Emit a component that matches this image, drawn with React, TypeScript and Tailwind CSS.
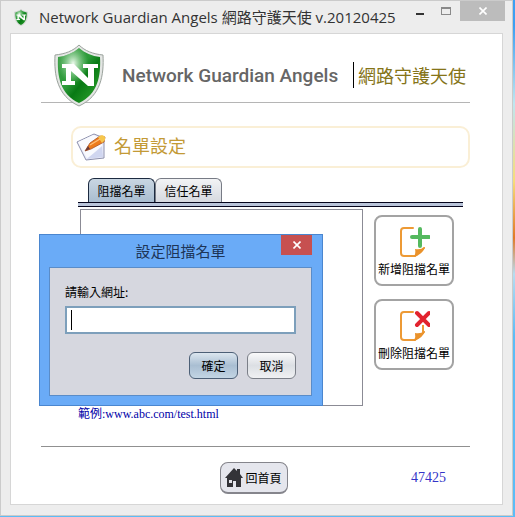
import { useState } from 'react';

// ---------------------------------------------------------------------------
// Shared styles
// ---------------------------------------------------------------------------

const UI_FONT = "font-['Open_Sans','Noto_Sans_CJK_TC',sans-serif]";

const CJK_FONT = "font-['Noto_Sans_CJK_TC',sans-serif]";

const SERIF_FONT = "font-['Liberation_Serif','Noto_Sans_CJK_TC',serif]";

const ACTION_CLASS =
  'flex h-[71px] w-20 flex-col items-center rounded-lg border-2 border-[#a3a3a3] bg-white pt-2 text-xs leading-4 text-black';

const DIALOG_BUTTON_CLASS =
  'h-[27px] w-[49px] rounded-md border text-xs leading-4 text-black';

// ---------------------------------------------------------------------------
// Icons
// ---------------------------------------------------------------------------

function ShieldLogo({ className }: { className: string }) {
  return (
    <svg viewBox="0 0 50 63" className={className} aria-hidden="true">
      <defs>
        <linearGradient id="shield" x1="0" y1="0" x2="1" y2="1">
          <stop offset="0" stopColor="#3fa049" />
          <stop offset=".45" stopColor="#2b9a38" />
          <stop offset=".6" stopColor="#087a14" />
          <stop offset="1" stopColor="#35a832" />
        </linearGradient>
        <radialGradient id="shine" cx=".36" cy=".28" r=".36">
          <stop offset="0" stopColor="#effbef" />
          <stop offset="1" stopColor="#8fd394" stopOpacity="0" />
        </radialGradient>
      </defs>
      <path
        d="M25 1C19 7 11 10 1 11C0 31 3 52 25 62C47 52 50 31 49 11C39 10 31 7 25 1Z"
        fill="#e4e6e4"
        stroke="#9aa29c"
        strokeWidth="1"
      />
      <path
        d="M25 4C19 9 12 12 4 13C3 32 6 50 25 59C44 50 47 32 46 13C38 12 31 9 25 4Z"
        fill="url(#shield)"
      />
      <path
        d="M25 4C19 9 12 12 4 13C3 32 6 50 25 59C44 50 47 32 46 13C38 12 31 9 25 4Z"
        fill="url(#shine)"
      />
      <path
        d="M8 20H20L34 34V24H29V20H44V24H40V42H34L17 27V37H21V41H8V37H12V24H8Z"
        fill="#fff"
      />
    </svg>
  );
}

function NotePencilIcon() {
  return (
    <svg viewBox="0 0 30 28" className="h-7 w-[30px]" aria-hidden="true">
      <path d="M1 9L18 1L28 5L28 25L10 27Z" fill="#eceefa" stroke="#8d90ad" strokeWidth="1" />
      <path d="M2 9L17 2L26 6L26 15L11 25Z" fill="#fff" opacity=".7" />
      <path d="M11 26L27 24L26 13Z" fill="#c9d0ee" opacity=".8" />
      <path d="M9 18L14 10L24 3L29 4L28 9L15 16Z" fill="#ee7c1c" stroke="#a9542a" strokeWidth=".8" />
      <path d="M22 4L26 2Q30 3 29 7L26 10Z" fill="#f6c64c" />
      <path d="M9 18L12 13L14 16Z" fill="#6a3a3a" />
      <path d="M14 12L24 6" stroke="#ffc07a" strokeWidth="1.4" />
    </svg>
  );
}

/** Dog-eared page with either a green plus or a red cross in the corner. */
function PageIcon({ mark }: { mark: 'add' | 'remove' }) {
  return (
    <svg viewBox="0 0 32 32" className="h-8 w-8" fill="none" aria-hidden="true">
      <path
        d="M15 3H6Q3 3 3 6V28Q3 31 6 31H17L26 23"
        stroke="#ed9a35"
        strokeWidth="2"
        strokeLinecap="round"
      />
      <path d="M16 32Q18 28 17 24Q23 25 27 22Q25 29 16 32Z" fill="#ea922b" />
      {mark === 'add' ? (
        <path d="M22 4V21M14 12H31" stroke="#55b95f" strokeWidth="4" strokeLinecap="round" />
      ) : (
        <>
          <path d="M25 16V23" stroke="#ed9a35" strokeWidth="2" />
          <path d="M19 4L31 16M31 4L19 16" stroke="#e2232e" strokeWidth="4" strokeLinecap="round" />
        </>
      )}
    </svg>
  );
}

function HomeIcon() {
  return (
    <svg viewBox="0 0 18 19" className="h-[19px] w-[18px]" aria-hidden="true">
      <path d="M9 0L12 3V1H15V6L18 10H16V19H11V13H8V19H2V10H0Z" fill="#333338" />
      <path d="M4 12H7V15H4Z" fill="#e4e4ea" />
    </svg>
  );
}

function CrossIcon() {
  return (
    <svg viewBox="0 0 8 8" className="size-2" aria-hidden="true">
      <path d="M.5.5L7.5 7.5M7.5.5L.5 7.5" stroke="#fff" strokeWidth="1.6" />
    </svg>
  );
}

// ---------------------------------------------------------------------------
// Window parts
// ---------------------------------------------------------------------------

function TitleBar() {
  return (
    <div className="flex h-8 items-start pr-[5px]">
      <ShieldLogo className="mt-2 ml-2.5 h-[17px] w-4 shrink-0" />
      <h1
        className={`mt-1 ml-2.5 min-w-0 flex-1 text-[15px] leading-6 whitespace-nowrap text-[#333] ${UI_FONT}`}
      >
        Network Guardian Angels 網路守護天使 v.20120425
      </h1>
      <button type="button" aria-label="Minimize" className="flex h-5 w-6 items-end justify-center pb-1.5">
        <span className="h-0.5 w-2 bg-[#333]" />
      </button>
      <button type="button" aria-label="Maximize" className="flex h-5 w-7 items-center justify-center">
        <span className="h-2 w-2.5 border border-t-2 border-[#8a8a8a]" />
      </button>
      <button
        type="button"
        aria-label="Close"
        className="flex h-5 w-[45px] items-center justify-center bg-[#bcbcbc]"
      >
        <CrossIcon />
      </button>
    </div>
  );
}

function Brand() {
  return (
    <header className="mr-8 ml-[30px] flex h-[69px] items-start border-b border-[#b5b5b5]">
      <ShieldLogo className="mt-2.5 ml-[13px] h-[63px] w-[50px] shrink-0" />
      <h2 className="mt-[30px] ml-[18px] font-['Roboto',sans-serif] text-[19px] leading-6 font-medium whitespace-nowrap text-[#666]">
        Network Guardian Angels
      </h2>
      <p
        className={`mt-7 ml-auto mr-1 border-l border-black pl-1 text-lg leading-[26px] whitespace-nowrap text-[#857418] ${CJK_FONT}`}
      >
        網路守護天使
      </p>
    </header>
  );
}

function Tabs({ active, onChange }: { active: number; onChange: (index: number) => void }) {
  return (
    <div className="mr-[39px] ml-[67px]">
      <div role="tablist" className={`flex pl-2.5 text-xs leading-4 ${CJK_FONT}`}>
        {['阻擋名單', '信任名單'].map((label, i) => (
          <button
            key={label}
            type="button"
            role="tab"
            aria-selected={i === active}
            onClick={() => onChange(i)}
            className={
              i === active
                ? 'h-6 w-[67px] rounded-t-md border border-b-0 border-[#1c2a40] bg-linear-to-b from-[#c9d6e2] to-[#a9bdd0] text-black'
                : 'h-6 w-[67px] rounded-t-md border border-b-0 border-[#777b85] bg-linear-to-b from-[#f2f3f5] to-[#d6d9df] text-black'
            }
          >
            {label}
          </button>
        ))}
      </div>
      <div className="h-[5px] border-y border-[#05051c] bg-[#b9c4d9]" />
    </div>
  );
}

function UrlDialog({ onClose }: { onClose: () => void }) {
  const [url, setUrl] = useState('');

  return (
    <form
      role="dialog"
      aria-labelledby="dialog-title"
      onSubmit={(e) => {
        e.preventDefault();
        onClose();
      }}
      className={`absolute top-[234px] left-[39px] w-[284px] border border-[#4a86cf] bg-[#6aabf7] pr-2.5 pb-[9px] pl-[9px] ${CJK_FONT}`}
    >
      <div className="relative flex h-8 items-center justify-center">
        <h2 id="dialog-title" className="text-[15px] leading-5 text-[#1d3557]">
          設定阻擋名單
        </h2>
        <button
          type="button"
          aria-label="Close"
          onClick={onClose}
          className="absolute top-0 right-0 flex h-5 w-[31px] items-center justify-center bg-[#c75050]"
        >
          <CrossIcon />
        </button>
      </div>
      <div className="border border-[#5a8cc8] bg-[#d6d7df] px-[15px] py-4">
        <label htmlFor="url" className="block text-xs leading-4 text-black">
          請輸入網址:
        </label>
        <div className="relative mt-1.5">
          <input
            id="url"
            autoFocus
            value={url}
            onChange={(e) => setUrl(e.target.value)}
            className={
              url
                ? 'block h-7 w-full border-2 border-[#7d9fbb] bg-white px-1 text-xs text-black outline-none'
                : 'block h-7 w-full border-2 border-[#7d9fbb] bg-white px-1 text-xs text-black caret-transparent outline-none'
            }
          />
          {/* steady caret while the field is empty */}
          {!url && <span className="absolute top-1 left-1.5 h-5 w-px bg-black" />}
        </div>
        <div className="mt-[18px] flex justify-end gap-[9px]">
          <button
            type="submit"
            className={`${DIALOG_BUTTON_CLASS} border-[#4c5f76] bg-linear-to-b from-[#dce6ef] via-[#a9bed2] to-[#c3d5e4]`}
          >
            確定
          </button>
          <button
            type="button"
            onClick={onClose}
            className={`${DIALOG_BUTTON_CLASS} border-[#7b7f88] bg-linear-to-b from-[#fafafb] via-[#dcdfe4] to-[#f0f1f3]`}
          >
            取消
          </button>
        </div>
      </div>
    </form>
  );
}

// ---------------------------------------------------------------------------
// App
// ---------------------------------------------------------------------------

export default function App() {
  const [tab, setTab] = useState(0);
  const [dialogOpen, setDialogOpen] = useState(true);

  return (
    <div className="relative flex min-h-screen bg-[linear-gradient(#3d9ff2_5%,#bfe6f0_20%,#f6dc7a_35%,#e07a28_46%,#b8dcf0_53%,#5cbcf6_65%)] pr-0.5 pb-px">
      <main className="flex min-w-0 flex-1 flex-col border border-[#cbcbcb] bg-[#ededed] px-0.5 pb-2.5">
        <TitleBar />
        <div className="mx-[7px] flex flex-1 flex-col border border-[#d6d6d6] bg-white">
          <Brand />

          <div className="mt-[23px] mr-8 ml-[60px] flex h-[42px] items-center gap-2 rounded-[10px] border-2 border-[#faefd6] pl-[3px]">
            <NotePencilIcon />
            <h3 className={`text-lg leading-6 text-[#c39a36] ${SERIF_FONT}`}>名單設定</h3>
          </div>

          <div className="mt-2.5">
            <Tabs active={tab} onChange={setTab} />
          </div>

          <div className="mt-0.5 mr-12 ml-[69px] flex justify-between">
            <div className="h-[197px] w-[283px] border border-[#8b8b95]" />
            <div className={`flex flex-col gap-[13px] pt-1.5 ${CJK_FONT}`}>
              <button type="button" className={ACTION_CLASS} onClick={() => setDialogOpen(true)}>
                <PageIcon mark="add" />
                <span className="mt-1 whitespace-nowrap">新增阻擋名單</span>
              </button>
              <button type="button" className={ACTION_CLASS}>
                <PageIcon mark="remove" />
                <span className="mt-1 whitespace-nowrap">刪除阻擋名單</span>
              </button>
            </div>
          </div>

          <p className={`ml-[67px] text-xs leading-4 text-[#0000a8] ${SERIF_FONT}`}>
            範例:www.abc.com/test.html
          </p>

          <footer className="mt-6 mr-8 ml-[30px] border-t border-[#909090] pt-[15px]">
            <div className="grid grid-cols-[1fr_auto_1fr] items-center pr-1">
              <button
                type="button"
                className={`col-start-2 flex h-8 w-[68px] items-center justify-center gap-0.5 rounded-lg border border-b-2 border-[#85858c] bg-[#e5e6ed] text-xs leading-4 text-black ${CJK_FONT}`}
              >
                <HomeIcon />
                <span>回首頁</span>
              </button>
              <span className={`pr-5 text-right text-sm leading-4 text-[#3434c8] ${SERIF_FONT}`}>
                47425
              </span>
            </div>
          </footer>
        </div>
      </main>
      {dialogOpen && <UrlDialog onClose={() => setDialogOpen(false)} />}
    </div>
  );
}
